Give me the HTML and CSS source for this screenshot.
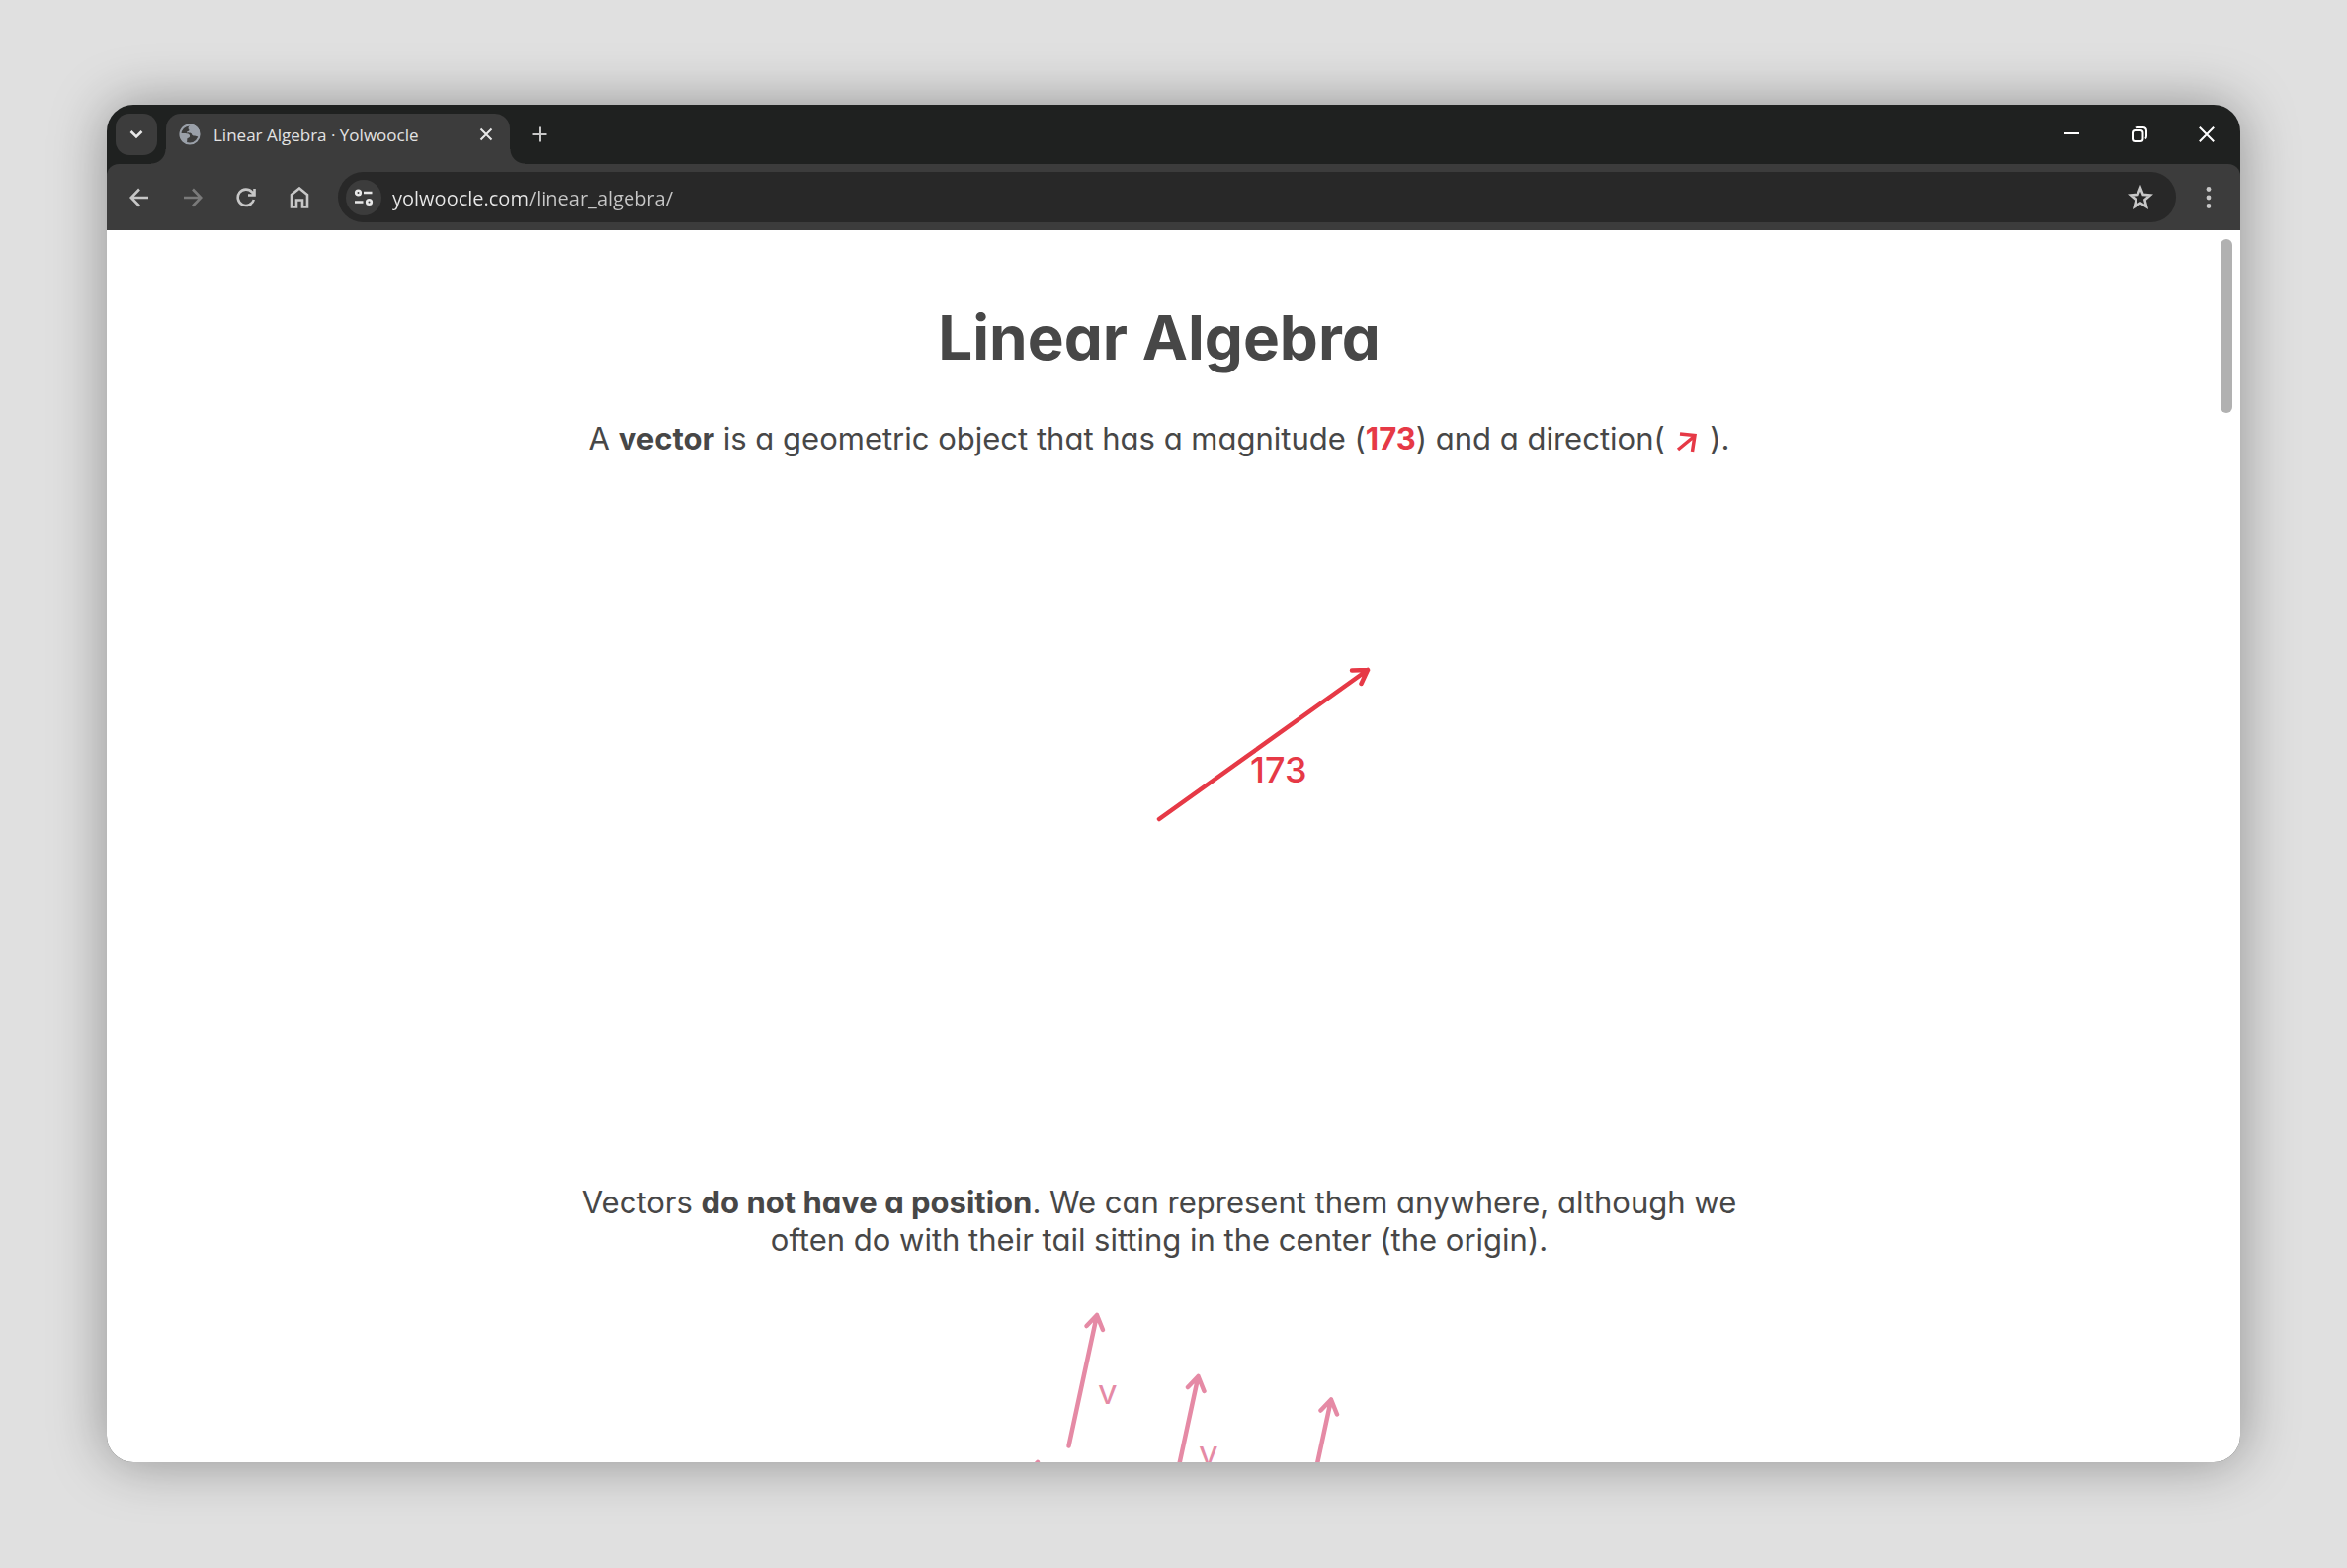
FILE: index.html
```html
<!DOCTYPE html>
<html lang="en">
<head>
<meta charset="utf-8">
<title>Linear Algebra · Yolwoocle</title>
<link rel="stylesheet" href="styles.css">
</head>
<body>
<div class="window">
  <header class="tab-strip">
    <button class="tab-search" type="button" aria-label="Search tabs">
      <svg width="14" height="10" viewBox="0 0 14 10"><path d="M1.500 2 7 7.500 12.500 2" class="line bright thick"/></svg>
    </button>
    <div class="tab">
      <svg class="favicon" width="22" height="22" viewBox="0 0 22 22">
        <circle cx="11" cy="11" r="9.600" fill="none" stroke="#9aa0a9" stroke-width="2"/>
        <path d="M12 1.500C10 3 9.500 3.500 9.500 5c0 1 1 1 1 2 0 1.200-2.500.6-2.500 2 0 1.200 4.500-.2 5 1.800.3 1.500 1.500 1.700 3 1.700 1.500 0 2 1 4 1 2-4 1-8-2-10C16 1.500 14 1 12 1.500zM1.500 10c2.500.2 7.500-.4 9 1.200 1.200 1.300.5 3.300-1 3.500-1 .2-1.200.6-1.200 1.600 0 1.700-.3 2.700-.3 3.700C4 19 1 15 1.500 10z" fill="#9aa0a9"/>
      </svg>
      <span class="tab-title">Linear Algebra · Yolwoocle</span>
      <button class="tab-close" type="button" aria-label="Close tab">
        <svg width="14" height="14" viewBox="0 0 14 14"><path d="M1.500 1.500l11 11M12.500 1.500l-11 11" class="line bright"/></svg>
      </button>
    </div>
    <button class="new-tab" type="button" aria-label="New tab">
      <svg width="16" height="16" viewBox="0 0 16 16"><path d="M8 .5v15M.5 8h15" class="line soft"/></svg>
    </button>
    <div class="window-controls">
      <button type="button" aria-label="Minimize"><svg width="16" height="16" viewBox="0 0 16 16"><path d="M0 7h15" class="line white"/></svg></button>
      <button type="button" aria-label="Restore"><svg width="16" height="16" viewBox="0 0 16 16"><rect x="1" y="4" width="10.500" height="11" rx="2.500" class="line white"/><path d="M4 1.500C4.500 1 5.500 1 6 1h5.500C13.500 1 15 2.500 15 4.500V10c0 1-.5 2-1.200 2.300" class="line white"/></svg></button>
      <button type="button" aria-label="Close"><svg width="16" height="16" viewBox="0 0 16 16"><path d="M.8.8l14.400 14.400M15.200.8.8 15.200" class="line white"/></svg></button>
    </div>
  </header>
  <nav class="toolbar">
    <button type="button" aria-label="Back"><svg width="20" height="20" viewBox="0 0 20 20"><path d="M19 10H2M10 1.500 1.700 10l8.300 8.500" class="line soft thick"/></svg></button>
    <button type="button" aria-label="Forward" class="inactive"><svg width="20" height="20" viewBox="0 0 20 20"><path d="M1 10h17M10 1.500l8.300 8.500-8.300 8.500" class="line soft thick"/></svg></button>
    <button type="button" aria-label="Reload"><svg width="20" height="20" viewBox="0 0 20 20"><path d="M17.800 12A8.200 8.200 0 1 1 16 4.300L18 6.500M18.500 1v6.500H12" class="line soft thick"/></svg></button>
    <button type="button" aria-label="Home"><svg width="20" height="22" viewBox="0 0 20 22"><path d="M2 8 10 1.500 18 8v12.500h-5v-7H7v7H2z" class="line soft thick"/></svg></button>
    <div class="omnibox">
      <button class="site-info" type="button" aria-label="Site information">
        <svg width="20" height="18" viewBox="0 0 20 18"><g class="line bright thick"><circle cx="4.500" cy="4" r="2.300"/><path d="M10 4h8.500M1 13.500h8.500"/><circle cx="15.500" cy="13.500" r="2.300"/></g></svg>
      </button>
      <input class="url" type="text" aria-label="Address" value="yolwoocle.com/linear_algebra/" spellcheck="false">
      <button class="bookmark" type="button" aria-label="Bookmark this page">
        <svg width="26" height="26" viewBox="0 0 26 26"><path d="M13 3.200l2.700 6.700 7.200.6-5.500 4.700 1.700 7.100-6.100-3.800-6.100 3.800 1.700-7.100-5.500-4.700 7.200-.6z" class="line soft thick"/></svg>
      </button>
    </div>
    <button class="menu" type="button" aria-label="Menu"><svg width="6" height="24" viewBox="0 0 6 24"><g fill="#c7c7c7"><circle cx="3" cy="3.500" r="2.400"/><circle cx="3" cy="12" r="2.400"/><circle cx="3" cy="20.500" r="2.400"/></g></svg></button>
  </nav>
  <div class="viewport">
    <main class="page">
      <h1>Linear Algebra</h1>
      <p>A <strong>vector</strong> is a geometric object that has a magnitude (<strong class="red">173</strong>) and a direction( <svg class="inline-arrow" width="28" height="24" viewBox="0 0 28 24"><path d="M5 20 22 6M7 4l15 1.500L19.500 22" class="vector-line red-stroke"/></svg> ).</p>
      <svg class="figure centered" width="600" height="735" viewBox="-300 -366 600 735">
        <path d="M0 0 211-151M195-150.500l16-.5-6.500 14" class="vector-line red-stroke"/>
        <text x="92" y="-37" class="label magnitude red-fill">173</text>
      </svg>
      <p>Vectors <strong>do not have a position</strong>. We can represent them anywhere, although we often do with their tail sitting in the center (the origin).</p>
      <svg class="figure" width="600" height="480" viewBox="-300 -26 600 480">
        <defs>
          <path id="v" d="M0 0l-28.500 132.500M-10.500 11 0 0l6 15"/>
        </defs>
        <g class="vector-line pink-stroke">
          <use href="#v" x="-63" y="31"/>
          <use href="#v" x="39.500" y="93"/>
          <use href="#v" x="174" y="116.500"/>
          <use href="#v" x="-123" y="180"/>
        </g>
        <g class="label pink-fill">
          <text x="-62" y="121">v</text>
          <text x="40" y="183">v</text>
        </g>
      </svg>
    </main>
    <div class="scrollbar"><div class="thumb"></div></div>
  </div>
</div>
</body>
</html>
```
FILE: styles.css
```css
* { box-sizing: border-box; }

body {
  margin: 0;
  height: 100vh;
  padding: 106px 108px 107px;
  display: flex;
  background: #e0e0e0;
  font-family: Inter, "Liberation Sans", sans-serif;
  overflow: hidden;
}

button {
  display: flex;
  align-items: center;
  justify-content: center;
  margin: 0;
  padding: 0;
  border: 0;
  background: none;
}

.line { fill: none; stroke-width: 2; }
.line.thick { stroke-width: 2.6; }
.bright { stroke: #e8e8e8; }
.soft { stroke: #c7c7c7; }
.white { stroke: #fff; }

.window {
  flex: 1;
  min-width: 0;
  display: flex;
  flex-direction: column;
  border-radius: 27px;
  overflow: hidden;
  background: #1f2120;
  box-shadow: 0 0 56px rgba(0, 0, 0, .36);
}

/* tab strip */
.tab-strip {
  display: flex;
  height: 60px;
  padding: 9px 0 0 9px;
  gap: 9px;
}
.tab-search {
  width: 42px;
  height: 42px;
  border-radius: 14px;
  background: #3c3c3c;
}
.tab {
  position: relative;
  width: 348px;
  display: flex;
  align-items: center;
  gap: 13px;
  padding: 0 14px 9px 13px;
  border-radius: 15px 15px 0 0;
  background: #3c3c3c;
}
.tab::before,
.tab::after {
  content: "";
  position: absolute;
  bottom: 0;
  width: 15px;
  height: 15px;
}
.tab::before {
  left: -15px;
  background: radial-gradient(circle at 0 0, transparent 14px, #3c3c3c 15px);
}
.tab::after {
  right: -15px;
  background: radial-gradient(circle at 100% 0, transparent 14px, #3c3c3c 15px);
}
.tab-title {
  flex: 1;
  padding-top: 2px;
  font: 17px/24px "Open Sans", "Noto Sans", sans-serif;
  color: #e3e3e3;
  white-space: nowrap;
}
.tab-close { width: 20px; height: 20px; }
.new-tab { width: 42px; height: 42px; }
.window-controls {
  display: flex;
  margin-left: auto;
  height: 42px;
}
.window-controls button { width: 68px; }

/* toolbar */
.toolbar {
  display: flex;
  align-items: center;
  height: 67px;
  padding: 0 5px 0 6px;
  border-radius: 12px 12px 0 0;
  background: #3c3c3c;
}
.toolbar > button { width: 54px; height: 48px; }
.inactive { opacity: .45; }
.omnibox {
  flex: 1;
  display: flex;
  align-items: center;
  height: 51px;
  margin: 0 6px 0 12px;
  padding: 0 12px 0 8px;
  border-radius: 26px;
  background: #282828;
}
.site-info {
  width: 36px;
  height: 36px;
  border-radius: 50%;
  background: #3c3c3c;
}
.url {
  flex: 1;
  min-width: 0;
  height: 38px;
  margin-left: 11px;
  padding: 2px 0 0;
  border: 0;
  outline: 0;
  font: 20px/36px "Open Sans", "Noto Sans", sans-serif;
  color: #e8e8e8;
  background: linear-gradient(to right, #e8e8e8 138px, #c7c7c7 138px);
  -webkit-background-clip: text;
  background-clip: text;
  -webkit-text-fill-color: transparent;
}
.bookmark { width: 48px; height: 36px; }

/* page */
.viewport {
  flex: 1;
  min-height: 0;
  display: flex;
  background: #fff;
}
.page {
  flex: 1;
  height: 100%;
  overflow: hidden;
  display: flex;
  flex-direction: column;
  align-items: center;
  color: #474747;
  text-align: center;
  font-feature-settings: "cv11";
}
.page > * { flex: none; }
h1 {
  margin: 73px 0 47px;
  font-size: 62px;
  line-height: 72px;
  font-weight: 700;
}
p {
  max-width: 1200px;
  margin: 0;
  font-size: 31px;
  line-height: 38px;
}
.red { color: #e63946; }
.vector-line {
  fill: none;
  stroke-width: 4.5;
  stroke-linecap: round;
  stroke-linejoin: round;
}
.red-stroke { stroke: #e63946; }
.pink-stroke { stroke: #e58aa5; }
.red-fill { fill: #e63946; }
.pink-fill { fill: #e58aa5; }
.inline-arrow { vertical-align: -4px; }
.inline-arrow .vector-line { stroke-width: 3.5; stroke-linecap: butt; stroke-linejoin: miter; }
.figure { display: block; }
.label { font-size: 35px; }
.magnitude { font-size: 36px; font-weight: 500; }

.scrollbar {
  width: 29px;
  padding: 9px 8px 0 9px;
}
.thumb {
  width: 12px;
  height: 176px;
  border-radius: 6px;
  background: #b1b1b1;
}
```
